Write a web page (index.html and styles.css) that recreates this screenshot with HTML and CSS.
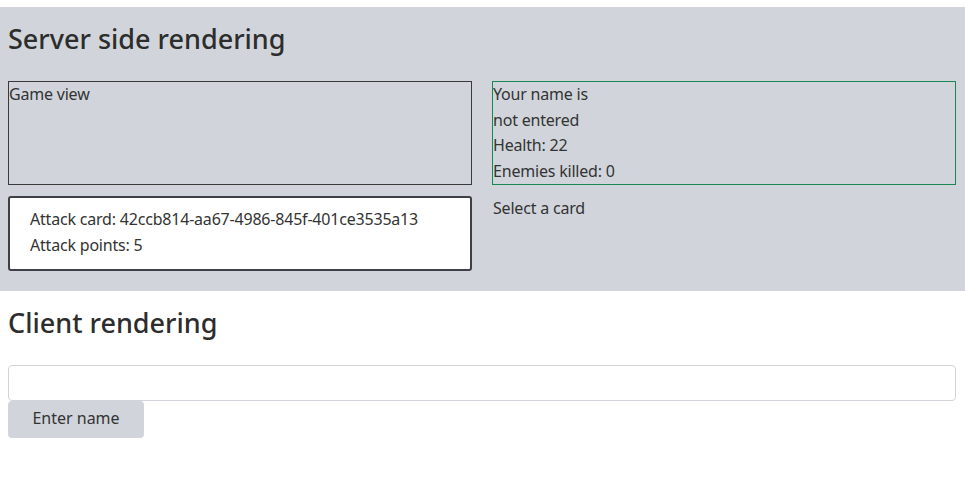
FILE: index.html
```html
<!DOCTYPE html>
<html>
<head>
<meta charset="utf-8">
<link rel="stylesheet" href="styles.css">
</head>
<body>
<section class="server">
  <h2 class="title">Server side rendering</h2>
  <div class="grid">
    <div class="box game">Game view</div>
    <div class="box player">
      <div>Your name is</div>
      <div>not entered</div>
      <div>Health: 22</div>
      <div>Enemies killed: 0</div>
    </div>
    <div class="card">
      <div>Attack card: 42ccb814-aa67-4986-845f-401ce3535a13</div>
      <div>Attack points: 5</div>
    </div>
    <div class="hint">Select a card</div>
  </div>
</section>
<section class="client">
  <h2 class="title">Client rendering</h2>
  <input class="name-input" type="text">
  <button class="enter-btn">Enter name</button>
</section>
</body>
</html>
```

FILE: styles.css
```css
html, body {
  margin: 0;
  padding: 0;
  background: #ffffff;
}
body {
  font-family: "Noto Sans", "Open Sans", sans-serif;
  font-size: 16px;
  line-height: 1.6;
  letter-spacing: -0.2px;
  color: #333333;
}
.server {
  margin-top: 7px;
  background: #d1d5db;
  padding: 13px 9px 20px 8px;
}
.title {
  margin: 0;
  font-size: 27px;
  font-weight: 500;
  line-height: 38px;
  letter-spacing: 0;
  color: #2d2d2d;
}
.grid {
  margin-top: 23px;
  display: grid;
  grid-template-columns: 1fr 1fr;
  column-gap: 20px;
  row-gap: 11px;
  align-items: start;
}
.box {
  border: 1px solid #3a3a3a;
  align-self: stretch;
}
.player {
  border-color: #198754;
}
.card {
  background: #ffffff;
  border: 2px solid #3f3f46;
  border-radius: 3px;
  padding: 9px 20px 10px;
}
.hint {
  padding-left: 1px;
}
.client {
  padding: 13px 9px 0 8px;
}
.client .title {
  margin-bottom: 23px;
}
.name-input {
  display: block;
  box-sizing: border-box;
  width: 100%;
  height: 36px;
  margin: 0;
  border: 1px solid #d1d5db;
  border-radius: 4px;
  font: inherit;
}
.enter-btn {
  display: block;
  width: 136px;
  height: 37px;
  margin: 0;
  border: none;
  border-radius: 4px;
  background: #d1d5db;
  color: #333333;
  font: inherit;
  padding: 0;
}
```
